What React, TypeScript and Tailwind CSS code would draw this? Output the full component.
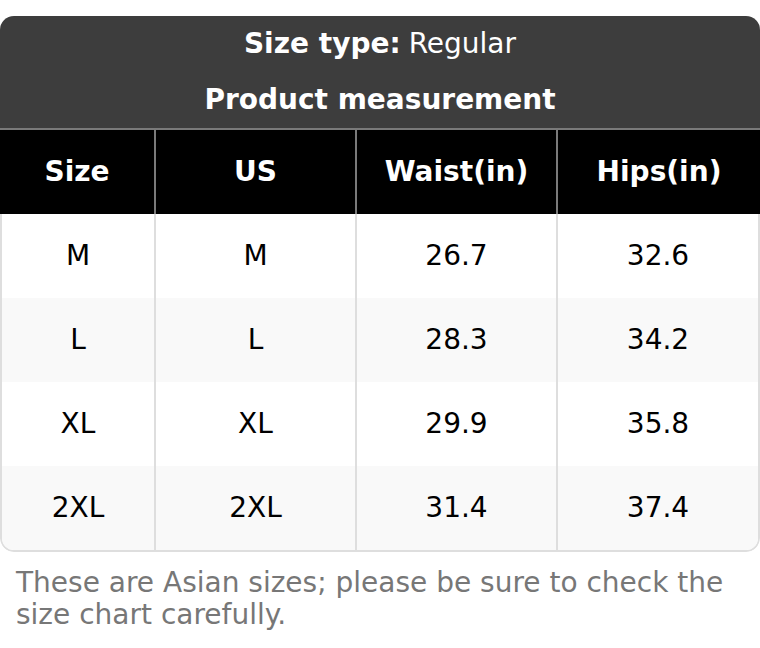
import React from 'react';

const rows = [
  ['M', 'M', '26.7', '32.6'],
  ['L', 'L', '28.3', '34.2'],
  ['XL', 'XL', '29.9', '35.8'],
  ['2XL', '2XL', '31.4', '37.4'],
];

const App: React.FC = () => {
  return (
    <div className="min-h-screen bg-white pt-4 font-['DejaVu_Sans',sans-serif]">
      <div className="rounded-[14px] overflow-hidden">
        {/* Title */}
        <div className="bg-[#3d3d3d] text-white text-[28px] text-center">
          <div className="h-[56px] flex items-center justify-center">
            <span className="font-bold">Size type:</span>
            <span className="ml-2">Regular</span>
          </div>
          <div className="h-[56px] flex items-center justify-center font-bold">
            Product measurement
          </div>
        </div>
        <div className="h-[2px] bg-[#7a7a7a]" />

        {/* Header row */}
        <div className="grid grid-cols-[154px_2px_199px_2px_199px_2px_1fr] bg-black text-white font-bold text-[28px] h-[84px]">
          <div className="flex items-center justify-center">Size</div>
          <div className="bg-[#7a7a7a]" />
          <div className="flex items-center justify-center">US</div>
          <div className="bg-[#7a7a7a]" />
          <div className="flex items-center justify-center">Waist(in)</div>
          <div className="bg-[#7a7a7a]" />
          <div className="flex items-center justify-center">Hips(in)</div>
        </div>

        {/* Body */}
        <div className="border-x-2 border-b-2 border-[#dedede] rounded-b-[14px] overflow-hidden">
          {rows.map((r, i) => (
            <div
              key={i}
              className={`grid grid-cols-[152px_2px_199px_2px_199px_2px_1fr] h-[84px] text-[28px] text-black ${i % 2 === 1 ? 'bg-[#f9f9f9]' : 'bg-white'}`}
            >
              <div className="flex items-center justify-center">{r[0]}</div>
              <div className="bg-[#dedede]" />
              <div className="flex items-center justify-center">{r[1]}</div>
              <div className="bg-[#dedede]" />
              <div className="flex items-center justify-center">{r[2]}</div>
              <div className="bg-[#dedede]" />
              <div className="flex items-center justify-center">{r[3]}</div>
            </div>
          ))}
        </div>
      </div>

      <p className="px-4 pt-[15px] text-[28px] leading-[32px] text-[#777777]">
        These are Asian sizes; please be sure to check the size chart carefully.
      </p>
    </div>
  );
};

export default App;
